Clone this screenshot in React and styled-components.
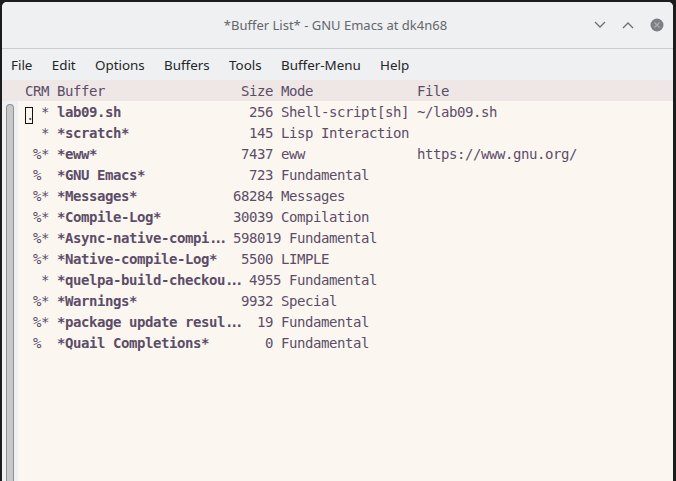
import React from 'react';
import styled, { createGlobalStyle } from 'styled-components';

const GlobalStyle = createGlobalStyle`
  html, body {
    margin: 0;
    padding: 0;
    background: #1c1c1c;
  }
  body {
    width: 676px;
    height: 481px;
    overflow: hidden;
  }
`;

const mono = `
  font-family: 'DejaVu Sans Mono', 'Liberation Mono', monospace;
  font-size: 14px;
  letter-spacing: -0.43px;
  white-space: pre;
`;

const Frame = styled.div`
  margin: 2px 3px 0 2px;
  height: 479px;
  display: flex;
  flex-direction: column;
  border-radius: 5px 5px 0 0;
  overflow: hidden;
  background: #fbf7f0;
`;

const TitleBar = styled.div`
  flex: none;
  height: 46px;
  display: grid;
  grid-template-columns: 1fr auto 1fr;
  align-items: center;
  background: #eff0f1;
  border-bottom: 1px solid #c9cbcd;
  font-family: 'Noto Sans', sans-serif;
  font-size: 13px;
  color: #62676c;
`;

const Title = styled.div`
  grid-column: 2;
  padding-right: 4px;
`;

const Controls = styled.div`
  justify-self: end;
  display: flex;
  align-items: center;
  gap: 16px;
  padding-right: 9px;
`;

const MenuBar = styled.div`
  flex: none;
  height: 31px;
  display: flex;
  align-items: center;
  gap: 19.3px;
  padding-left: 9px;
  background: #eff0f1;
  font-family: 'Noto Sans', sans-serif;
  font-size: 13.4px;
  color: #232629;
`;

const HeaderLine = styled.div`
  ${mono}
  flex: none;
  height: 21px;
  line-height: 23px;
  padding-left: 23px;
  background: #eee7e5;
  color: #5b4d69;
  overflow: hidden;
`;

const Body = styled.div`
  flex: 1;
  display: flex;
  min-height: 0;
`;

const ScrollTrack = styled.div`
  flex: none;
  width: 16px;
  display: flex;
  padding: 3px 0 0 4px;
  box-sizing: border-box;
  background: #eff0f1;
`;

const Thumb = styled.div`
  width: 8px;
  box-sizing: border-box;
  border: 1px solid #8e9092;
  border-bottom: none;
  border-radius: 4px 4px 0 0;
  background: #c8c8c8;
`;

const Listing = styled.div`
  ${mono}
  flex: 1;
  padding-left: 7px;
  color: #5b4d69;
`;

const Row = styled.div`
  height: 21px;
  line-height: 23px;
`;

const Name = styled.span`
  font-weight: bold;
`;

const Cursor = styled.span`
  display: inline-block;
  width: 8px;
  height: 17px;
  box-sizing: border-box;
  border: 1px solid #111;
  vertical-align: -3px;
  line-height: 15px;
  letter-spacing: 0;
`;

const Ellipsis = styled.span`
  display: inline-block;
  width: 16px;
  overflow: hidden;
  font-weight: bold;
  letter-spacing: -3.4px;
  vertical-align: top;
`;

const Chevron = ({ up }) => (
  <svg width="12" height="8" viewBox="0 0 12 8">
    <path
      d={up ? 'M1 7 L6 2 L11 7' : 'M1 1 L6 6 L11 1'}
      fill="none"
      stroke="#6c7075"
      strokeWidth="1.3"
    />
  </svg>
);

const CloseButton = () => (
  <svg width="14" height="14" viewBox="0 0 14 14">
    <circle cx="7" cy="7" r="6.5" fill="#7c8086" />
    <path d="M4.5 4.5 L9.5 9.5 M9.5 4.5 L4.5 9.5" stroke="#a9adb2" strokeWidth="1.2" />
  </svg>
);

const menus = ['File', 'Edit', 'Options', 'Buffers', 'Tools', 'Buffer-Menu', 'Help'];

// cut = what follows a truncated name, spacing as Emacs shifted it
const buffers = [
  { crm: ' * ', name: 'lab09.sh', size: '256', mode: 'Shell-script[sh]', file: '~/lab09.sh', current: true },
  { crm: '  * ', name: '*scratch*', size: '145', mode: 'Lisp Interaction' },
  { crm: ' %* ', name: '*eww*', size: '7437', mode: 'eww', file: 'https://www.gnu.org/' },
  { crm: ' %  ', name: '*GNU Emacs*', size: '723', mode: 'Fundamental' },
  { crm: ' %* ', name: '*Messages*', size: '68284', mode: 'Messages' },
  { crm: ' %* ', name: '*Compile-Log*', size: '30039', mode: 'Compilation' },
  { crm: ' %* ', name: '*Async-native-compi', cut: ' 598019 Fundamental' },
  { crm: ' %* ', name: '*Native-compile-Log*', size: '5500', mode: 'LIMPLE' },
  { crm: '  * ', name: '*quelpa-build-checkou', cut: ' 4955 Fundamental' },
  { crm: ' %* ', name: '*Warnings*', size: '9932', mode: 'Special' },
  { crm: ' %* ', name: '*package update resul', cut: '  19 Fundamental' },
  { crm: ' %  ', name: '*Quail Completions*', size: '0', mode: 'Fundamental' },
];

const restOf = (b) =>
  ' ' + b.size.padStart(6) + ' ' + (b.file ? b.mode.padEnd(16) + ' ' + b.file : b.mode);

const header = 'CRM ' + 'Buffer'.padEnd(20) + ' ' + '  Size' + ' ' + 'Mode'.padEnd(16) + ' ' + 'File';

export default function App() {
  return (
    <>
      <GlobalStyle />
      <Frame>
        <TitleBar>
          <Title>*Buffer List* - GNU Emacs at dk4n68</Title>
          <Controls>
            <Chevron />
            <Chevron up />
            <CloseButton />
          </Controls>
        </TitleBar>
        <MenuBar>
          {menus.map((m) => (
            <span key={m}>{m}</span>
          ))}
        </MenuBar>
        <HeaderLine>{header}</HeaderLine>
        <Body>
          <ScrollTrack>
            <Thumb />
          </ScrollTrack>
          <Listing>
            {buffers.map((b) => (
              <Row key={b.name}>
                {b.current && <Cursor>.</Cursor>}
                {b.crm}
                {b.cut ? (
                  <>
                    <Name>{b.name}</Name>
                    <Ellipsis>...</Ellipsis>
                    {b.cut}
                  </>
                ) : (
                  <>
                    <Name>{b.name.padEnd(20)}</Name>
                    {restOf(b)}
                  </>
                )}
              </Row>
            ))}
          </Listing>
        </Body>
      </Frame>
    </>
  );
}
